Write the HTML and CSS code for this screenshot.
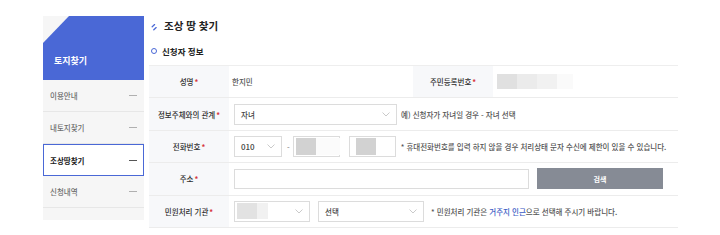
FILE: index.html
```html
<!DOCTYPE html>
<html lang="ko">
<head>
<meta charset="utf-8">
<title>조상 땅 찾기</title>
<link rel="stylesheet" href="styles.css">
</head>
<body>
<div class="page">
  <aside class="side">
    <div class="side-head">토지찾기</div>
    <ul class="menu">
      <li class="item"><span>이용안내</span><i class="dash"></i></li>
      <li class="item"><span>내토지찾기</span><i class="dash"></i></li>
      <li class="item active"><span>조상땅찾기</span><i class="dash"></i></li>
      <li class="item"><span>신청내역</span><i class="dash"></i></li>
    </ul>
  </aside>
  <main class="main">
    <h1 class="title"><svg class="title-ico" width="6" height="7" viewBox="0 0 6 7"><path d="M3.6 0.6 L1.2 2.8 M5.2 3.6 L2.8 5.8" stroke="#4a68d6" stroke-width="1.3" fill="none" stroke-linecap="round"/></svg>조상 땅 찾기</h1>
    <h2 class="sub"><span class="ring"></span>신청자 정보</h2>
    <div class="table">
      <div class="row">
        <div class="th">성명<em>*</em></div>
        <div class="td td-name">한지민</div>
        <div class="th">주민등록번호<em>*</em></div>
        <div class="td td-id"><span class="blur b1"></span><span class="blur b2"></span><span class="blur b3"></span><span class="blur b4"></span></div>
      </div>
      <div class="row">
        <div class="th">정보주체와의 관계<em>*</em></div>
        <div class="td">
          <div class="sel sel-rel"><span>자녀</span><svg class="chev" width="8" height="5" viewBox="0 0 8 5"><path d="M0.5 0.5 L4 4 L7.5 0.5" stroke="#c4c4c4" stroke-width="0.9" fill="none"/></svg></div>
          <span class="note note-rel">예) 신청자가 자녀일 경우 - 자녀 선택</span>
        </div>
      </div>
      <div class="row">
        <div class="th">전화번호<em>*</em></div>
        <div class="td">
          <div class="sel sel-tel"><span class="num">010</span><svg class="chev" width="8" height="5" viewBox="0 0 8 5"><path d="M0.5 0.5 L4 4 L7.5 0.5" stroke="#c4c4c4" stroke-width="0.9" fill="none"/></svg></div>
          <span class="hyph">-</span>
          <div class="inp inp-tel"><span class="blur t1"></span><span class="blur t2"></span></div>
          <div class="inp inp-tel inp-tel2"><span class="blur t1"></span></div>
          <span class="note note-tel">* 휴대전화번호를 입력 하지 않을 경우 처리상태 문자 수신에 제한이 있을 수 있습니다.</span>
        </div>
      </div>
      <div class="row">
        <div class="th">주소<em>*</em></div>
        <div class="td">
          <div class="inp inp-addr"></div>
          <button class="btn" type="button">검색</button>
        </div>
      </div>
      <div class="row">
        <div class="th">민원처리 기관<em>*</em></div>
        <div class="td">
          <div class="sel sel-org"><span class="blur o1"></span><span class="blur o2"></span><svg class="chev" width="8" height="5" viewBox="0 0 8 5"><path d="M0.5 0.5 L4 4 L7.5 0.5" stroke="#c4c4c4" stroke-width="0.9" fill="none"/></svg></div>
          <div class="sel sel-org2"><span>선택</span><svg class="chev" width="8" height="5" viewBox="0 0 8 5"><path d="M0.5 0.5 L4 4 L7.5 0.5" stroke="#c4c4c4" stroke-width="0.9" fill="none"/></svg></div>
          <span class="note note-org">* 민원처리 기관은 <b class="blue">거주지 인근</b>으로 선택해 주시기 바랍니다.</span>
        </div>
      </div>
    </div>
  </main>
</div>
</body>
</html>
```

FILE: styles.css
```css
* { box-sizing: border-box; }
html, body { margin: 0; padding: 0; background: #fff; }
body {
  font-family: "Noto Sans CJK KR", "Noto Sans", sans-serif;
  color: #333;
  font-size: 7.5px;
  font-weight: 500;
}
.page {
  display: flex;
  align-items: flex-start;
  padding: 16px 0 0 43px;
}
.side {
  width: 101px;
  flex: none;
  background: #f6f6f6;
  padding-bottom: 12px;
}
.side-head {
  height: 64px;
  background: #4a68d6;
  clip-path: polygon(0 27px, 26px 0, 100% 0, 100% 100%, 0 100%);
  color: #fff;
  font-weight: 700;
  font-size: 9px;
  line-height: 12px;
  display: flex;
  align-items: flex-end;
  padding: 0 0 13px 11px;
}
.menu { list-style: none; margin: 0; padding: 0; }
.item {
  height: 32px;
  display: flex;
  align-items: center;
  justify-content: space-between;
  padding: 0 7px 0 7px;
  border-bottom: 1px solid #e7e7e7;
  color: #6e6e6e;
  font-size: 7.5px;
}
.item.active {
  background: #fff;
  border: 1px solid #4a68d6;
  color: #222;
  font-weight: 700;
  padding: 0 6px 0 6px;
}
.dash {
  display: block;
  width: 8px;
  height: 1px;
  background: #b0b0b0;
}
.item.active .dash { background: #555; }
.main {
  width: 529px;
  margin-left: 5px;
  flex: none;
}
.title {
  margin: 3px 0 0 0;
  font-size: 10.5px;
  line-height: 14px;
  font-weight: 700;
  color: #222;
  display: flex;
  align-items: center;
}
.title-ico { margin: 3px 7px 0 2px; flex: none; }
.sub {
  margin: 12px 0 8px 0;
  font-size: 8.5px;
  line-height: 12px;
  font-weight: 700;
  color: #222;
  display: flex;
  align-items: center;
}
.ring {
  width: 6px;
  height: 6px;
  border: 1.6px solid #4a68d6;
  border-radius: 50%;
  margin: 0 5px 0 2px;
}
.table { border-top: 1px solid #eeeeee; }
.row {
  display: flex;
  height: 32.4px;
  border-bottom: 1px solid #ececec;
}
.th {
  width: 80px;
  flex: none;
  background: #f7f8fa;
  display: flex;
  align-items: center;
  justify-content: center;
  color: #2e2e2e;
}
.th em { font-style: normal; font-weight: 700; color: #d6343c; margin-left: 1px; }
.td {
  flex: 1;
  display: flex;
  align-items: center;
  padding-left: 5px;
  color: #555;
}
.td-name { flex: none; width: 184px; padding-left: 3px; }
.td-id { padding-left: 4px; }
.blur { display: block; flex: none; }
.b1 { width: 20px; height: 15px; background: #e0e0e0; }
.b2 { width: 20px; height: 15px; background: #ebebeb; }
.b3 { width: 20px; height: 15px; background: #f1f1f1; }
.b4 { width: 16px; height: 15px; background: #fafafa; }
.sel, .inp {
  height: 21px;
  border: 1px solid #dcdcdc;
  background: #fff;
  display: flex;
  align-items: center;
  flex: none;
}
.sel {
  justify-content: space-between;
  padding: 0 6px 0 6px;
  color: #444;
}
.sel-rel { width: 163px; }
.note { color: #555; font-size: 7.5px; white-space: nowrap; }
.note-rel { margin-left: 4px; }
.sel-tel { width: 48px; }
.num { font-size: 8px; }
.hyph { margin: 0 3px 0 5px; color: #888; }
.inp-tel { width: 47px; padding-left: 2px; }
.inp-tel2 { margin-left: 9px; padding-left: 6px; }
.t1 { width: 20px; height: 17px; background: #d2d2d2; }
.t2 { width: 24px; height: 17px; background: #fbfbfb; }
.note-tel { margin-left: 5px; }
.inp-addr { width: 295px; height: 20px; }
.btn {
  margin-left: 8px;
  width: 126px;
  height: 21px;
  border: 0;
  background: #868b95;
  color: #fff;
  font-family: inherit;
  font-weight: 700;
  font-size: 7px;
  padding: 0;
}
.sel-org { width: 76px; padding-left: 2px; }
.o1 { width: 20px; height: 16px; background: #e2e2e2; }
.o2 { width: 11px; height: 16px; background: #f1f1f1; margin-right: auto; }
.sel-org2 { width: 106px; margin-left: 8px; }
.note-org { margin-left: 7px; }
.blue { color: #3b5bc4; font-weight: 500; }
```
